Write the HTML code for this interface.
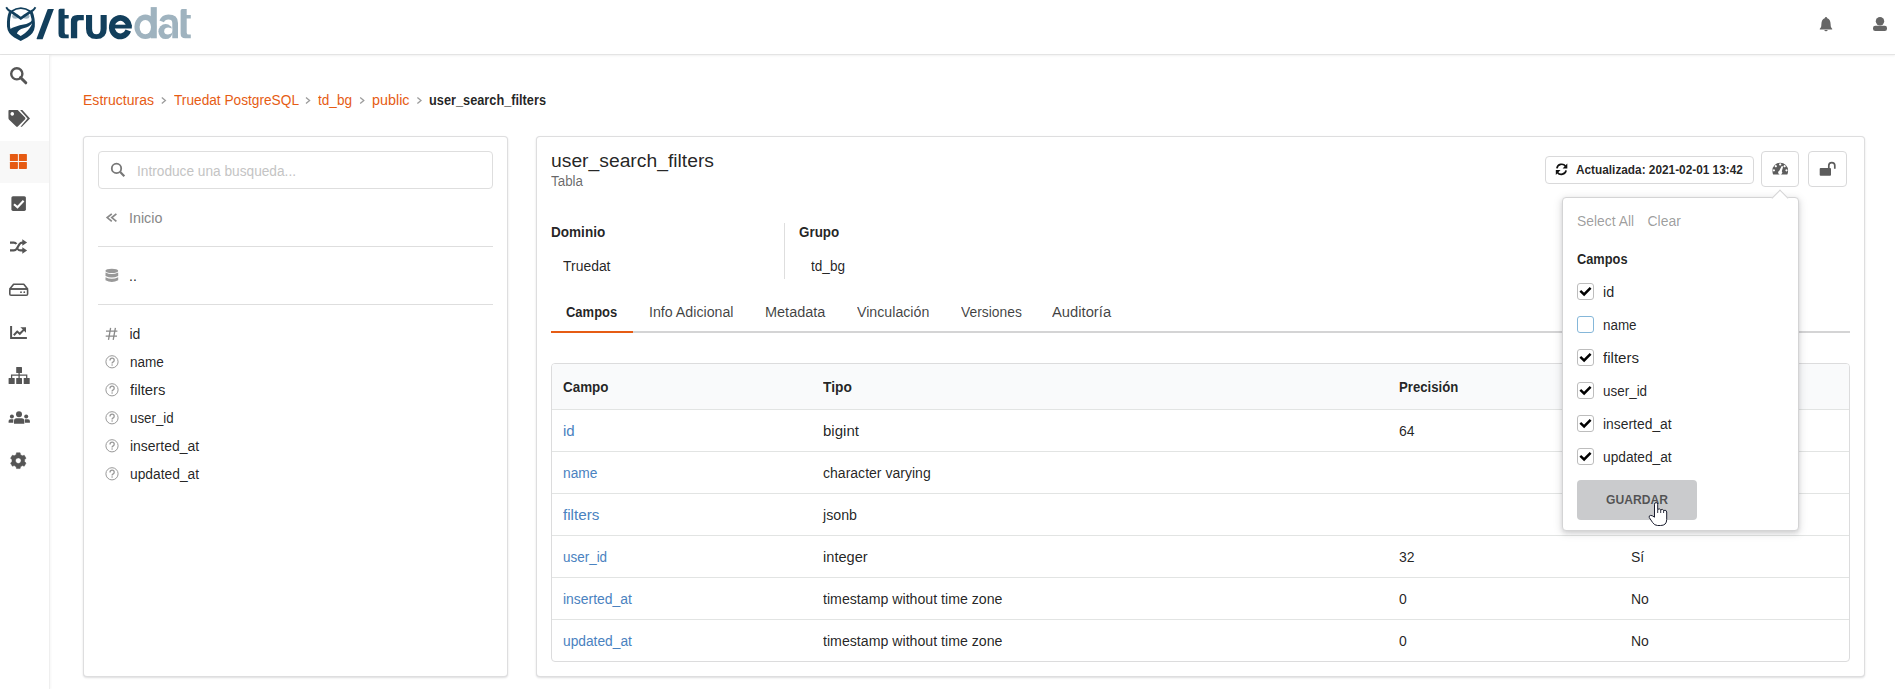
<!DOCTYPE html>
<html><head><meta charset="utf-8"><style>
html,body{margin:0;padding:0;width:1895px;height:689px;overflow:hidden;background:#fff;font-family:"Liberation Sans",sans-serif;}
.t{position:absolute;white-space:nowrap;line-height:1;transform-origin:0 0}
.seg{position:absolute;border:1px solid rgba(34,36,38,.15);border-radius:4px;box-shadow:0 1px 2px 0 rgba(34,36,38,.15);background:#fff}
svg{position:absolute;overflow:visible}
</style></head><body>
<div style="position:absolute;left:0;top:0;width:1895px;height:54px;background:#fff;border-bottom:1px solid #e4e4e4;box-shadow:0 1px 2px rgba(0,0,0,.06)"></div>
<div style="position:absolute;left:0;top:55px;width:49px;height:634px;background:#fff;border-right:1px solid #efefef;box-shadow:1px 0 2px rgba(0,0,0,.04)"></div>
<div style="position:absolute;left:0;top:141px;width:49px;height:42px;background:#f8f8f8"></div>
<div class="seg" style="left:83px;top:136px;width:423px;height:539px"></div>
<div style="position:absolute;left:98px;top:151px;width:393px;height:36px;border:1px solid #dedede;border-radius:4px;background:#fff"></div>
<div style="position:absolute;left:98px;top:246px;width:395px;height:1px;background:#dedede"></div>
<div style="position:absolute;left:98px;top:304px;width:395px;height:1px;background:#dedede"></div>
<div class="seg" style="left:536px;top:136px;width:1327px;height:539px"></div>
<div style="position:absolute;left:784px;top:223px;width:1px;height:56px;background:#dedede"></div>
<div style="position:absolute;left:551px;top:331px;width:1299px;height:2px;background:#d4d4d5"></div>
<div style="position:absolute;left:551px;top:331px;width:82px;height:2px;background:#e65c14"></div>
<div style="position:absolute;left:551px;top:363px;width:1297px;height:297px;border:1px solid #dcdcdd;border-radius:4px;overflow:hidden;background:#fff"><div style="position:absolute;left:0;top:0;width:100%;height:45px;background:#f9fafb;border-bottom:1px solid #e2e4e3"></div><div style="position:absolute;left:0;top:87px;width:100%;height:1px;background:#e2e4e3"></div><div style="position:absolute;left:0;top:129px;width:100%;height:1px;background:#e2e4e3"></div><div style="position:absolute;left:0;top:171px;width:100%;height:1px;background:#e2e4e3"></div><div style="position:absolute;left:0;top:213px;width:100%;height:1px;background:#e2e4e3"></div><div style="position:absolute;left:0;top:255px;width:100%;height:1px;background:#e2e4e3"></div></div>
<div style="position:absolute;left:1545px;top:156px;width:207px;height:26px;border:1px solid #d9d9da;border-radius:4px;background:#fff"></div>
<div style="position:absolute;left:1761px;top:151px;width:36px;height:34px;border:1px solid #d9d9da;border-radius:4px;background:#fff"></div>
<div style="position:absolute;left:1808px;top:151px;width:37px;height:34px;border:1px solid #d9d9da;border-radius:4px;background:#fff"></div>
<div class="t" style="left:82.50px;top:92.95px;font-size:14px;color:#e65c14;transform:scaleX(1.0026)">Estructuras</div>
<div class="t" style="left:173.50px;top:92.95px;font-size:14px;color:#e65c14;transform:scaleX(0.9774)">Truedat PostgreSQL</div>
<div class="t" style="left:318.00px;top:92.95px;font-size:14px;color:#e65c14;transform:scaleX(0.9701)">td_bg</div>
<div class="t" style="left:371.50px;top:92.95px;font-size:14px;color:#e65c14;transform:scaleX(1.0248)">public</div>
<div class="t" style="left:429.00px;top:92.95px;font-size:14px;color:rgba(0,0,0,.87);font-weight:700;transform:scaleX(0.9111)">user_search_filters</div>
<div class="t" style="left:136.50px;top:164.45px;font-size:14px;color:#c4c4c4;transform:scaleX(0.9773)">Introduce una busqueda...</div>
<div class="t" style="left:129.30px;top:210.75px;font-size:14px;color:#888;transform:scaleX(1.0218)">Inicio</div>
<div class="t" style="left:129.00px;top:269.45px;font-size:14px;color:rgba(0,0,0,.87)">..</div>
<div class="t" style="left:129.50px;top:326.75px;font-size:14px;color:rgba(0,0,0,.87)">id</div>
<div class="t" style="left:129.80px;top:354.75px;font-size:14px;color:rgba(0,0,0,.87);transform:scaleX(0.9677)">name</div>
<div class="t" style="left:129.80px;top:382.75px;font-size:14px;color:rgba(0,0,0,.87);transform:scaleX(1.0612)">filters</div>
<div class="t" style="left:129.80px;top:410.75px;font-size:14px;color:rgba(0,0,0,.87);transform:scaleX(0.9516)">user_id</div>
<div class="t" style="left:129.80px;top:438.75px;font-size:14px;color:rgba(0,0,0,.87);transform:scaleX(0.9974)">inserted_at</div>
<div class="t" style="left:129.80px;top:466.75px;font-size:14px;color:rgba(0,0,0,.87);transform:scaleX(0.9860)">updated_at</div>
<div class="t" style="left:550.50px;top:152.26px;font-size:18px;color:rgba(0,0,0,.87);transform:scaleX(1.0718)">user_search_filters</div>
<div class="t" style="left:550.50px;top:173.85px;font-size:14px;color:rgba(0,0,0,.6);transform:scaleX(0.9561)">Tabla</div>
<div class="t" style="left:550.50px;top:225.45px;font-size:14px;color:rgba(0,0,0,.87);font-weight:700;transform:scaleX(0.9679)">Dominio</div>
<div class="t" style="left:563.00px;top:258.55px;font-size:14px;color:rgba(0,0,0,.87);transform:scaleX(0.9951)">Truedat</div>
<div class="t" style="left:799.00px;top:225.45px;font-size:14px;color:rgba(0,0,0,.87);font-weight:700;transform:scaleX(0.9571)">Grupo</div>
<div class="t" style="left:811.20px;top:258.55px;font-size:14px;color:rgba(0,0,0,.87);transform:scaleX(0.9701)">td_bg</div>
<div class="t" style="left:566.30px;top:304.95px;font-size:14px;color:rgba(0,0,0,.87);font-weight:700;transform:scaleX(0.9270)">Campos</div>
<div class="t" style="left:649.00px;top:304.95px;font-size:14px;color:rgba(0,0,0,.75);transform:scaleX(1.0144)">Info Adicional</div>
<div class="t" style="left:765.30px;top:304.95px;font-size:14px;color:rgba(0,0,0,.75);transform:scaleX(1.0347)">Metadata</div>
<div class="t" style="left:857.20px;top:304.95px;font-size:14px;color:rgba(0,0,0,.75);transform:scaleX(1.0132)">Vinculación</div>
<div class="t" style="left:960.60px;top:304.95px;font-size:14px;color:rgba(0,0,0,.75);transform:scaleX(0.9905)">Versiones</div>
<div class="t" style="left:1052.40px;top:304.95px;font-size:14px;color:rgba(0,0,0,.75);transform:scaleX(1.0545)">Auditoría</div>
<div class="t" style="left:562.50px;top:380.15px;font-size:14px;color:rgba(0,0,0,.87);font-weight:700;transform:scaleX(0.9588)">Campo</div>
<div class="t" style="left:823.30px;top:380.15px;font-size:14px;color:rgba(0,0,0,.87);font-weight:700;transform:scaleX(0.9830)">Tipo</div>
<div class="t" style="left:1399.00px;top:380.15px;font-size:14px;color:rgba(0,0,0,.87);font-weight:700;transform:scaleX(0.9408)">Precisión</div>
<div class="t" style="left:562.50px;top:424.15px;font-size:14px;color:#4a82c0;transform:scaleX(1.0728)">id</div>
<div class="t" style="left:823.30px;top:424.15px;font-size:14px;color:rgba(0,0,0,.87);transform:scaleX(1.0726)">bigint</div>
<div class="t" style="left:1399.00px;top:424.15px;font-size:14px;color:rgba(0,0,0,.87)">64</div>
<div class="t" style="left:1631.00px;top:424.15px;font-size:14px;color:rgba(0,0,0,.87)">Sí</div>
<div class="t" style="left:562.50px;top:466.15px;font-size:14px;color:#4a82c0;transform:scaleX(0.9820)">name</div>
<div class="t" style="left:823.30px;top:466.15px;font-size:14px;color:rgba(0,0,0,.87);transform:scaleX(1.0029)">character varying</div>
<div class="t" style="left:1631.00px;top:466.15px;font-size:14px;color:rgba(0,0,0,.87)">No</div>
<div class="t" style="left:562.50px;top:508.15px;font-size:14px;color:#4a82c0;transform:scaleX(1.0881)">filters</div>
<div class="t" style="left:823.30px;top:508.15px;font-size:14px;color:rgba(0,0,0,.87);transform:scaleX(1.0159)">jsonb</div>
<div class="t" style="left:1631.00px;top:508.15px;font-size:14px;color:rgba(0,0,0,.87)">No</div>
<div class="t" style="left:562.50px;top:550.15px;font-size:14px;color:#4a82c0;transform:scaleX(0.9603)">user_id</div>
<div class="t" style="left:823.30px;top:550.15px;font-size:14px;color:rgba(0,0,0,.87);transform:scaleX(1.0441)">integer</div>
<div class="t" style="left:1399.00px;top:550.15px;font-size:14px;color:rgba(0,0,0,.87)">32</div>
<div class="t" style="left:1631.00px;top:550.15px;font-size:14px;color:rgba(0,0,0,.87)">Sí</div>
<div class="t" style="left:562.50px;top:592.15px;font-size:14px;color:#4a82c0;transform:scaleX(0.9945)">inserted_at</div>
<div class="t" style="left:823.30px;top:592.15px;font-size:14px;color:rgba(0,0,0,.87);transform:scaleX(1.0118)">timestamp without time zone</div>
<div class="t" style="left:1399.00px;top:592.15px;font-size:14px;color:rgba(0,0,0,.87)">0</div>
<div class="t" style="left:1631.00px;top:592.15px;font-size:14px;color:rgba(0,0,0,.87)">No</div>
<div class="t" style="left:562.50px;top:634.15px;font-size:14px;color:#4a82c0;transform:scaleX(0.9832)">updated_at</div>
<div class="t" style="left:823.30px;top:634.15px;font-size:14px;color:rgba(0,0,0,.87);transform:scaleX(1.0118)">timestamp without time zone</div>
<div class="t" style="left:1399.00px;top:634.15px;font-size:14px;color:rgba(0,0,0,.87)">0</div>
<div class="t" style="left:1631.00px;top:634.15px;font-size:14px;color:rgba(0,0,0,.87)">No</div>
<div class="t" style="left:1576.30px;top:163.84px;font-size:12px;color:rgba(0,0,0,.87);font-weight:700;transform:scaleX(0.9844)">Actualizada: 2021-02-01 13:42</div>
<svg style="left:0;top:0" width="1895" height="689" viewBox="0 0 1895 689">
<!-- logo owl -->
<ellipse cx="15.5" cy="16.2" rx="3.3" ry="2.5" fill="#9fb3bf"/>
<ellipse cx="26.1" cy="16.2" rx="3.3" ry="2.5" fill="#9fb3bf"/>
<g fill="none" stroke="#123f5c">
  <path d="M6.2,7.3 Q8.3,11 11.2,11.5 Q20.8,4.8 30.6,11.5 Q33.4,11 35.5,7.3" stroke-width="1.8"/>
  <path d="M11.2,11.6 L20.8,18.3 L30.6,11.6" stroke-width="2.6" stroke-linejoin="miter"/>
  <path d="M10.4,12 C8.6,16.5 8.2,21 8.5,26.5 C8.9,31.3 11.3,34 15,36.3 L20.7,39.3 L26.5,36.3 C30.4,34 32.9,31.3 33.3,26.5 C33.6,21 33,16.5 31.2,12" stroke-width="3"/>
</g>
<path fill="#123f5c" d="M9.2,29.6 C13.5,27.3 18.5,25.3 23.5,24.6 C27.5,24 30,22.8 31.9,20.6 L33.6,26.5 C33,31.3 30.6,34 26.5,36.3 L20.7,39.5 L15,36.3 C11.8,34.3 9.5,32 9.2,29.6 Z"/>
<path fill="#fff" d="M16.9,33.6 C17.8,30.8 20,29 23.5,28.2 C27.2,27.5 30.2,25.8 32.1,23.3 C30.5,28.5 26,33 20.7,36.1 Z"/>
<g fill="#123f5c">
  <path d="M47.6,9.2 Q48,8.9 48.6,8.9 L53.9,8.9 L42.6,39.3 L37.1,39.3 Q36.4,39.3 36.6,38.6 Z"/>
</g>
<g fill="#123f5c">
  <path d="M58.5,10.4 Q58.5,8.8 60.1,8.8 L64.6,8.8 L64.6,15.1 L68.7,15.1 L68.7,18.5 L64.6,18.5 L64.6,32.4 Q64.6,34.6 66.6,34.6 L68.7,34.6 L68.7,38.3 L63.0,38.3 Q58.5,38.3 58.5,33.5 Z"/>
  <path d="M70.9,38.3 L70.9,21.5 Q70.9,15.1 77.3,15.1 L83.8,15.1 L83.8,20.2 L79.3,20.2 Q77.2,20.2 77.2,22.4 L77.2,38.3 Z"/>
  <path d="M86,15.1 L92.1,15.1 L92.1,28.8 Q92.1,34.3 96.35,34.3 Q100.6,34.3 100.6,28.8 L100.6,15.1 L106.7,15.1 L106.7,28.8 Q106.7,39.1 96.35,39.1 Q86,39.1 86,28.8 Z"/>
  <path d="M128.9,26.6 A8.55,9.2 0 1 0 128.3,30.6" fill="none" stroke="#123f5c" stroke-width="5.8"/>
  <rect x="112" y="24.7" width="19.8" height="3.8"/>
</g>
<g fill="#9fb3bf">
  <ellipse cx="145.4" cy="26.8" rx="11" ry="12.2"/>
  <rect x="150.7" y="7.1" width="6.1" height="31.2"/>
  <path d="M159.4,20.6 Q161.8,14.6 168.4,14.6 Q178,14.6 178,23 L178,38.3 L172.3,38.3 L172.3,23 Q172.3,19.6 168.4,19.6 Q165,19.6 164,22.3 Z"/>
  <ellipse cx="165.6" cy="31.6" rx="7.2" ry="7.5"/>
  <path d="M180.6,10.7 Q180.6,9.1 182.2,9.1 L186.7,9.1 L186.7,15.1 L190.79999999999998,15.1 L190.79999999999998,18.5 L186.7,18.5 L186.7,32.4 Q186.7,34.6 188.7,34.6 L190.79999999999998,34.6 L190.79999999999998,38.3 L185.1,38.3 Q180.6,38.3 180.6,33.5 Z"/>
</g>
<g fill="#fff">
  <ellipse cx="145.3" cy="27.1" rx="5.7" ry="7.2"/>
  <path d="M172.3,28.6 L168.5,27.6 Q164.2,27.6 164.2,31.2 Q164.2,34.4 168,34.4 Q172.3,34.2 172.3,31 Z"/>
</g>
<!-- header icons -->
<g fill="#666">
  <path d="M1826,17 Q1827,17 1827.3,18.3 Q1830.5,19.5 1830.6,24 L1830.8,26.5 Q1831.2,28 1832.2,28.8 L1832.2,29.6 L1819.8,29.6 L1819.8,28.8 Q1820.8,28 1821.2,26.5 L1821.4,24 Q1821.5,19.5 1824.7,18.3 Q1825,17 1826,17 Z"/>
  <path d="M1824.3,30 L1827.7,30 Q1827.5,31.2 1826,31.2 Q1824.5,31.2 1824.3,30 Z"/>
  <circle cx="1880" cy="21.2" r="4.2"/>
  <rect x="1873" y="25.7" width="14" height="5.2" rx="2.2"/>
</g>

<!-- sidebar icons -->
<g fill="#555" stroke="none">
  <circle cx="16.8" cy="73.8" r="5.6" fill="none" stroke="#555" stroke-width="2.4"/>
  <path d="M20.5,77.5 L25.8,82.8" stroke="#555" stroke-width="3" stroke-linecap="round"/>
  <!-- tags -->
  <path fill-rule="evenodd" d="M9.3,109.9 L17.7,109.9 L25.1,117.5 Q25.8,118.4 25.1,119.2 L17.8,126.6 Q17,127.2 16.2,126.6 L8.9,119.4 Q8.45,118.9 8.45,118 L8.45,110.8 Q8.45,109.9 9.3,109.9 Z M12.25,112.1 A1.8,1.8 0 1 0 12.26,112.1 Z"/>
  <path d="M20.1,109.9 L22.3,109.9 L30,118.4 L21.9,126.8 L20.5,126.8 L27.5,118.4 Z"/>
</g>
<g fill="#e65a12">
  <rect x="9.9" y="153.9" width="8" height="7.1" rx="0.6"/>
  <rect x="18.9" y="153.9" width="8" height="7.1" rx="0.6"/>
  <rect x="9.9" y="162" width="8" height="6.9" rx="0.6"/>
  <rect x="18.9" y="162" width="8" height="6.9" rx="0.6"/>
</g>
<rect x="11.4" y="196.2" width="14.5" height="14.7" rx="1.6" fill="#555"/>
<path d="M14,204.2 L17.5,207.3 L23.6,200.8" fill="none" stroke="#fff" stroke-width="2.1"/>
<!-- shuffle -->
<g fill="none" stroke="#555" stroke-width="2.1">
  <path d="M10,242.6 L13.8,242.6 Q15.5,242.6 16.5,244"/>
  <path d="M17.5,248.8 Q18.8,250.4 20.5,250.4 L23.5,250.4"/>
  <path d="M10,250.4 L13.8,250.4 Q15.5,250.4 16.8,248.6 L19.3,244.4 Q20.5,242.6 22.3,242.6 L23.5,242.6"/>
</g>
<g fill="#555">
  <path d="M22.3,239.2 L27.1,242.5 L22.3,245.8 Z"/>
  <path d="M22.3,247.2 L27.1,250.5 L22.3,253.8 Z"/>
</g>
<!-- hdd -->
<g fill="none" stroke="#555" stroke-width="1.6" stroke-linejoin="round">
  <path d="M13.6,284.2 L23.8,284.2 L27.6,289 L9.8,289 Z"/>
  <rect x="9.8" y="289" width="17.8" height="6.2" rx="1.3"/>
</g>
<circle cx="21" cy="292.2" r="0.9" fill="#555"/><circle cx="24.3" cy="292.2" r="0.9" fill="#555"/>
<!-- chart -->
<g fill="none" stroke="#555">
  <path d="M11.1,326.1 L11.1,337.9 L26.9,337.9" stroke-width="2"/>
  <path d="M13.8,335.2 L17.2,331.6 L19.8,333.8 L24.2,329.4" stroke-width="2"/>
</g>
<path d="M20.4,327.2 L26,327.2 L26,332.8 Z" fill="#555"/>
<!-- sitemap -->
<g fill="#555">
  <rect x="16.2" y="367" width="5.8" height="5.9" rx="0.5"/>
  <rect x="8.6" y="378" width="6.1" height="6.1" rx="0.5"/>
  <rect x="16.2" y="378" width="5.8" height="6.1" rx="0.5"/>
  <rect x="23.7" y="378" width="6" height="6.1" rx="0.5"/>
</g>
<path d="M19.1,372.5 L19.1,378 M11.6,378 L11.6,375.1 L26.7,375.1 L26.7,378" fill="none" stroke="#555" stroke-width="1.3"/>
<!-- users -->
<g fill="#555">
  <circle cx="19" cy="414.3" r="3"/>
  <path d="M14,421 Q14,418.2 16.5,418.2 L21.8,418.2 Q24.3,418.2 24.3,421 L24.3,423.8 L14,423.8 Z"/>
  <circle cx="11.9" cy="416.4" r="2"/>
  <circle cx="26.2" cy="416.4" r="2"/>
  <path d="M8.6,421 Q8.6,419.2 10.4,419.2 L13.3,419.2 L13.3,422.8 L8.6,422.8 Z"/>
  <path d="M24.9,419.2 L28,419.2 Q29.9,419.2 29.9,421 L29.9,422.8 L24.9,422.8 Z"/>
</g>
<!-- cog -->
<g transform="translate(18.3,460.7)"><path fill="#555" fill-rule="evenodd" stroke="#555" stroke-width="0.5" stroke-linejoin="round" d="M-2.19,-6.01 L-1.82,-7.89 L1.82,-7.89 L2.19,-6.01 L4.11,-4.90 L5.92,-5.52 L7.75,-2.37 L6.30,-1.11 L6.30,1.11 L7.75,2.37 L5.92,5.52 L4.11,4.90 L2.19,6.01 L1.82,7.89 L-1.82,7.89 L-2.19,6.01 L-4.11,4.90 L-5.92,5.52 L-7.75,2.37 L-6.30,1.11 L-6.30,-1.11 L-7.75,-2.37 L-5.92,-5.52 L-4.11,-4.90 Z M0,-2.8 A2.8,2.8 0 1 0 0.01,-2.8 Z"/></g>
<!-- breadcrumb chevrons -->
<g fill="none" stroke="#9c9c9c" stroke-width="1.3">
  <path d="M161.8,97.6 L165.4,100.6 L161.8,103.6"/>
  <path d="M306,97.6 L309.6,100.6 L306,103.6"/>
  <path d="M360.2,97.6 L363.8,100.6 L360.2,103.6"/>
  <path d="M417.4,97.6 L421,100.6 L417.4,103.6"/>
</g>

<!-- left panel icons -->
<circle cx="116.5" cy="168.4" r="4.7" fill="none" stroke="#777" stroke-width="1.8"/>
<path d="M120.2,172 L124.3,176.3" stroke="#777" stroke-width="2.2" stroke-linecap="butt"/>
<g fill="none" stroke="#888" stroke-width="1.7">
  <path d="M111.8,213.9 L107.2,217.6 L111.8,221.4"/>
  <path d="M116.4,213.9 L111.8,217.6 L116.4,221.4"/>
</g>
<g fill="#999">
  <ellipse cx="111.8" cy="270.9" rx="6.4" ry="2.2"/>
  <path d="M105.5,272.4 Q111.8,275.6 118.2,272.4 L118.2,276 Q111.8,279.2 105.5,276 Z"/>
  <path d="M105.5,277.2 Q111.8,280.4 118.2,277.2 L118.2,280.2 Q111.8,283.8 105.5,280.2 Z"/>
</g>
<g fill="none" stroke="#8a8a8a" stroke-width="1.3">
  <path d="M106,331.1 L117.4,331.1 M105.7,336.2 L117,336.2 M110.6,327.9 L108.5,339.8 M115.4,327.9 L113.2,339.8"/>
</g>
<g id="q"><circle cx="112" cy="361.8" r="6.1" fill="none" stroke="#999" stroke-width="1"/><path d="M110,360.40000000000003 Q110,358.2 112.1,358.2 Q114.2,358.2 114.2,360.2 Q114.2,361.40000000000003 112.9,362.1 Q112.1,362.6 112.1,363.40000000000003" fill="none" stroke="#999" stroke-width="1.3"/><circle cx="112.1" cy="365.0" r="0.8" fill="#999"/><circle cx="112" cy="389.8" r="6.1" fill="none" stroke="#999" stroke-width="1"/><path d="M110,388.40000000000003 Q110,386.2 112.1,386.2 Q114.2,386.2 114.2,388.2 Q114.2,389.40000000000003 112.9,390.1 Q112.1,390.6 112.1,391.40000000000003" fill="none" stroke="#999" stroke-width="1.3"/><circle cx="112.1" cy="393.0" r="0.8" fill="#999"/><circle cx="112" cy="417.8" r="6.1" fill="none" stroke="#999" stroke-width="1"/><path d="M110,416.40000000000003 Q110,414.2 112.1,414.2 Q114.2,414.2 114.2,416.2 Q114.2,417.40000000000003 112.9,418.1 Q112.1,418.6 112.1,419.40000000000003" fill="none" stroke="#999" stroke-width="1.3"/><circle cx="112.1" cy="421.0" r="0.8" fill="#999"/><circle cx="112" cy="445.8" r="6.1" fill="none" stroke="#999" stroke-width="1"/><path d="M110,444.40000000000003 Q110,442.2 112.1,442.2 Q114.2,442.2 114.2,444.2 Q114.2,445.40000000000003 112.9,446.1 Q112.1,446.6 112.1,447.40000000000003" fill="none" stroke="#999" stroke-width="1.3"/><circle cx="112.1" cy="449.0" r="0.8" fill="#999"/><circle cx="112" cy="473.8" r="6.1" fill="none" stroke="#999" stroke-width="1"/><path d="M110,472.40000000000003 Q110,470.2 112.1,470.2 Q114.2,470.2 114.2,472.2 Q114.2,473.40000000000003 112.9,474.1 Q112.1,474.6 112.1,475.40000000000003" fill="none" stroke="#999" stroke-width="1.3"/><circle cx="112.1" cy="477.0" r="0.8" fill="#999"/></g>
<!-- action button icons -->
<g fill="none" stroke="#111" stroke-width="1.7">
  <path d="M1556.9,168.3 A4.9,4.9 0 0 1 1565.6,166.2"/>
  <path d="M1566.1,170.3 A4.9,4.9 0 0 1 1557.4,172.4"/>
</g>
<path d="M1567.3,163.6 L1567.3,168.5 L1562.6,168.5 Z" fill="#111"/>
<path d="M1555.8,174.9 L1555.8,170 L1560.5,170 Z" fill="#111"/>
<path fill="#5c5c5c" fill-rule="evenodd" d="M1773.2,174.6 Q1772.4,172.8 1772.4,170.5 A7.85,7.85 0 0 1 1788.1,170.5 Q1788.1,172.8 1787.3,174.6 Z
 M1780.2,163.3 A1.1,1.1 0 1 0 1780.21,163.3 Z M1775.8,165.1 A1.1,1.1 0 1 0 1775.81,165.1 Z M1784.6,165.1 A1.1,1.1 0 1 0 1784.61,165.1 Z M1773.9,169.2 A1.1,1.1 0 1 0 1773.91,169.2 Z M1786.5,169.2 A1.1,1.1 0 1 0 1786.51,169.2 Z
 M1781.7,166.1 L1783.2,166.6 L1781.8,171.3 A2,2 0 1 1 1779.3,170.7 Z"/>
<rect x="1819.7" y="168.1" width="11.3" height="7.6" rx="0.9" fill="#5c5c5c"/>
<path d="M1828.8,168.4 L1828.8,165.6 A3,3 0 0 1 1834.8,165.6 L1834.8,168.7" fill="none" stroke="#5c5c5c" stroke-width="1.7"/>
</svg>

<div style="position:absolute;left:1562px;top:197px;width:235px;height:332px;border:1px solid #d4d4d5;border-radius:4px;background:#fff;box-shadow:0 2px 4px rgba(34,36,38,.12),0 2px 10px rgba(34,36,38,.15)"></div>
<div style="position:absolute;left:1774px;top:192px;width:11px;height:11px;background:#fff;transform:rotate(45deg);border-left:1px solid #d4d4d5;border-top:1px solid #d4d4d5"></div>
<div style="position:absolute;left:1577px;top:283px;width:15px;height:15px;border:1px solid #bdbdbd;border-radius:3px;background:#fff"></div>
<div style="position:absolute;left:1577px;top:316px;width:15px;height:15px;border:1px solid #85b7d9;border-radius:3px;background:#fff"></div>
<div style="position:absolute;left:1577px;top:349px;width:15px;height:15px;border:1px solid #bdbdbd;border-radius:3px;background:#fff"></div>
<div style="position:absolute;left:1577px;top:382px;width:15px;height:15px;border:1px solid #bdbdbd;border-radius:3px;background:#fff"></div>
<div style="position:absolute;left:1577px;top:415px;width:15px;height:15px;border:1px solid #bdbdbd;border-radius:3px;background:#fff"></div>
<div style="position:absolute;left:1577px;top:448px;width:15px;height:15px;border:1px solid #bdbdbd;border-radius:3px;background:#fff"></div>
<div style="position:absolute;left:1577px;top:480px;width:120px;height:40px;border-radius:4px;background:#cacbcd"></div>
<div class="t" style="left:1576.50px;top:214.15px;font-size:14px;color:rgba(0,0,0,.4);transform:scaleX(0.9914)">Select All</div>
<div class="t" style="left:1647.50px;top:214.15px;font-size:14px;color:rgba(0,0,0,.4)">Clear</div>
<div class="t" style="left:1577.00px;top:252.05px;font-size:14px;color:rgba(0,0,0,.87);font-weight:700;transform:scaleX(0.9143)">Campos</div>
<div class="t" style="left:1603.00px;top:284.85px;font-size:14px;color:rgba(0,0,0,.87);transform:scaleX(1.0269)">id</div>
<div class="t" style="left:1603.00px;top:317.85px;font-size:14px;color:rgba(0,0,0,.87);transform:scaleX(0.9591)">name</div>
<div class="t" style="left:1603.00px;top:350.85px;font-size:14px;color:rgba(0,0,0,.87);transform:scaleX(1.0791)">filters</div>
<div class="t" style="left:1603.00px;top:383.85px;font-size:14px;color:rgba(0,0,0,.87);transform:scaleX(0.9603)">user_id</div>
<div class="t" style="left:1603.00px;top:416.85px;font-size:14px;color:rgba(0,0,0,.87);transform:scaleX(0.9916)">inserted_at</div>
<div class="t" style="left:1603.00px;top:449.85px;font-size:14px;color:rgba(0,0,0,.87);transform:scaleX(0.9803)">updated_at</div>
<div class="t" style="left:1606.00px;top:493.84px;font-size:12px;color:rgba(0,0,0,.6);font-weight:700;transform:scaleX(1.0107)">GUARDAR</div>
<svg style="left:0;top:0" width="1895" height="689" viewBox="0 0 1895 689">
<g fill="none" stroke="#000" stroke-width="2.5">
<path d="M1580.3,290.9 L1584.1,294.4 L1590.6,287.8"/>
<path d="M1580.3,356.9 L1584.1,360.4 L1590.6,353.8"/>
<path d="M1580.3,389.9 L1584.1,393.4 L1590.6,386.8"/>
<path d="M1580.3,422.9 L1584.1,426.4 L1590.6,419.8"/>
<path d="M1580.3,455.9 L1584.1,459.4 L1590.6,452.8"/>
</g>
<path d="M1654.5,504.2 Q1654.5,502.6 1656.1,502.6 Q1657.7,502.6 1657.7,504.2 L1657.7,509.3 Q1659.8,508.3 1660.7,509.8 Q1662.8,508.8 1663.6,510.4 Q1666.7,509.6 1666.7,512 L1666.7,519.5 Q1666.7,525.5 1660.5,525.5 L1657.6,525.5 Q1654.5,525.5 1652.6,522.5 L1649.3,517.6 Q1648.6,515.6 1650.6,515.4 Q1652,515.2 1654.5,517.2 Z" fill="#fff" stroke="#1a1d2e" stroke-width="1"/>
<path d="M1657.7,509.3 L1657.7,513 M1660.7,509.8 L1660.7,513 M1663.6,510.4 L1663.6,513" stroke="#1a1d2e" stroke-width="0.9"/>
</svg>

</body></html>
